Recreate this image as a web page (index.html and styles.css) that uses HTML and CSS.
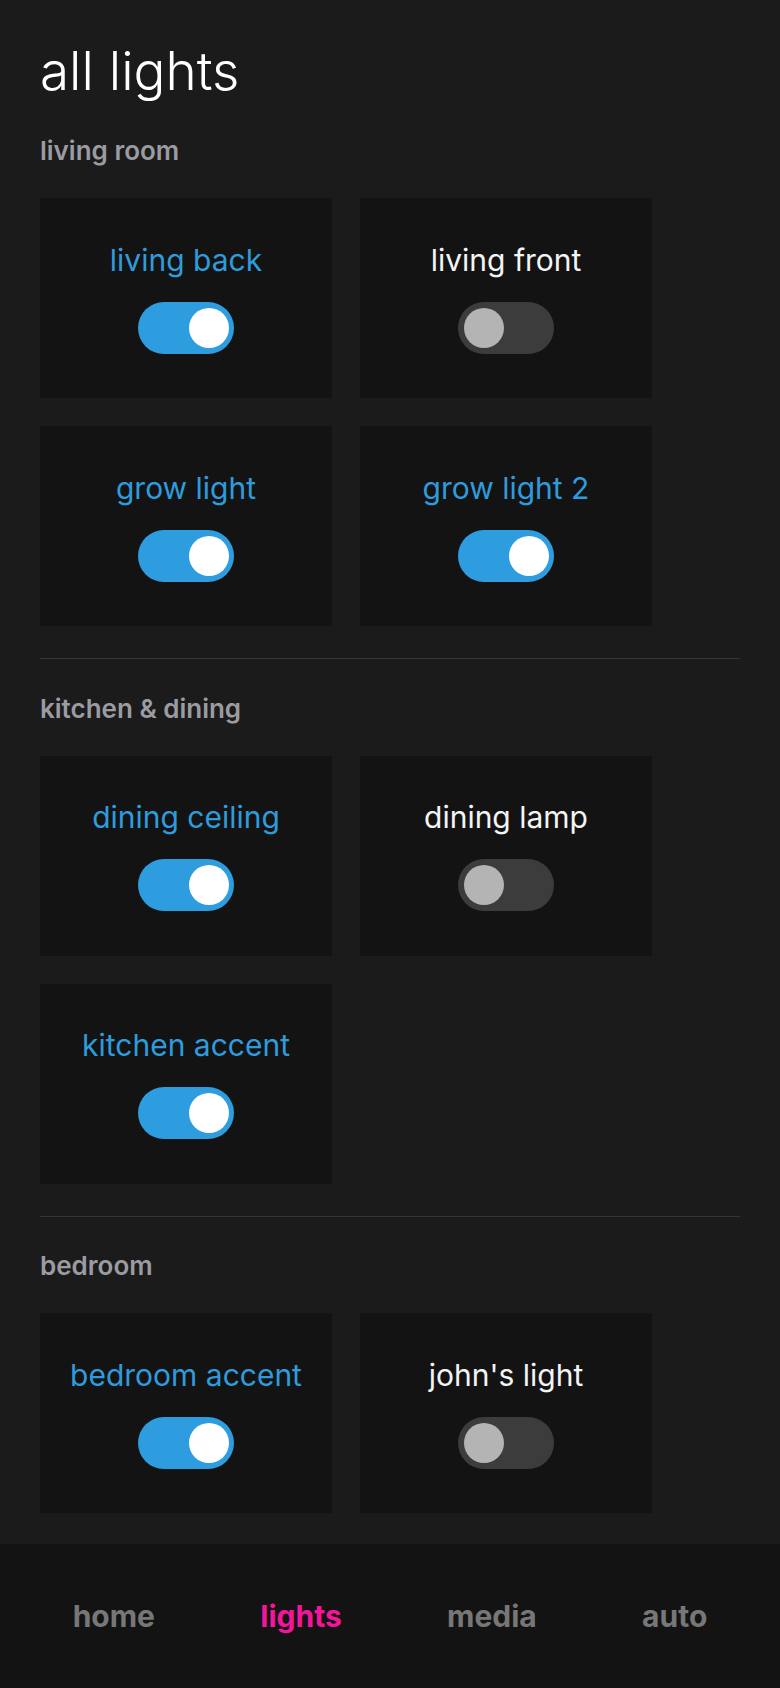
FILE: index.html
```html
<!DOCTYPE html>
<html lang="en">
<head>
  <meta charset="UTF-8">
  <title>all lights</title>
  <link rel="stylesheet" href="styles.css">
</head>
<body>
  <main class="pagina">
    <h1 class="titulo">all lights</h1>

    <section class="sala">
      <h2 class="sala-nome">living room</h2>
      <div class="grade">
        <div class="luz ligada"><span class="luz-nome">living back</span><div class="chave"></div></div>
        <div class="luz"><span class="luz-nome">living front</span><div class="chave"></div></div>
        <div class="luz ligada"><span class="luz-nome">grow light</span><div class="chave"></div></div>
        <div class="luz ligada"><span class="luz-nome">grow light 2</span><div class="chave"></div></div>
      </div>
    </section>

    <section class="sala">
      <h2 class="sala-nome">kitchen &amp; dining</h2>
      <div class="grade">
        <div class="luz ligada"><span class="luz-nome">dining ceiling</span><div class="chave"></div></div>
        <div class="luz"><span class="luz-nome">dining lamp</span><div class="chave"></div></div>
        <div class="luz ligada"><span class="luz-nome">kitchen accent</span><div class="chave"></div></div>
      </div>
    </section>

    <section class="sala">
      <h2 class="sala-nome">bedroom</h2>
      <div class="grade">
        <div class="luz ligada"><span class="luz-nome">bedroom accent</span><div class="chave"></div></div>
        <div class="luz"><span class="luz-nome">john's light</span><div class="chave"></div></div>
      </div>
    </section>
  </main>

  <nav class="menu">
    <a class="menu-item">home</a>
    <a class="menu-item ativo">lights</a>
    <a class="menu-item">media</a>
    <a class="menu-item">auto</a>
  </nav>

  <script>
    // liga/desliga ao clicar no cartao
    document.querySelectorAll(".luz").forEach(luz => {
      luz.addEventListener("click", () => luz.classList.toggle("ligada"));
    });
  </script>
</body>
</html>
```

FILE: styles.css
```css
* {
  box-sizing: border-box;
  margin: 0;
  padding: 0;
}

body {
  background: #1b1b1b;
  color: #fff;
  font-family: Inter, "Noto Sans", sans-serif;
  height: 100vh;
  display: flex;
  flex-direction: column;
}

.pagina {
  flex: 1;
  overflow: hidden;
  padding: 41px 40px 0;
}

.titulo {
  font-size: 53px;
  font-weight: 300;
  line-height: 60px;
  margin-bottom: 36px;
}

.sala {
  padding: 35.5px 0 32px;
  border-bottom: 1px solid #353535;
}

.sala:first-of-type {
  padding-top: 0;
}

.sala:last-of-type {
  border-bottom: none;
}

.sala-nome {
  font-size: 26px;
  font-weight: 600;
  line-height: 28px;
  color: #9b9ca1;
  margin-bottom: 33px;
}

.grade {
  display: grid;
  grid-template-columns: repeat(2, 292px);
  gap: 28px;
}

.luz {
  height: 200px;
  background: #131313;
  display: flex;
  flex-direction: column;
  align-items: center;
  justify-content: center;
  gap: 25px;
  cursor: pointer;
}

.luz-nome {
  font-size: 30px;
  line-height: 34px;
  color: #f4f4f4;
}

.chave {
  width: 96px;
  height: 52px;
  border-radius: 26px;
  background: #3c3c3c;
  padding: 6px;
  display: flex;
}

.chave::after {
  content: "";
  width: 40px;
  height: 40px;
  border-radius: 50%;
  background: #b4b4b4;
}

.ligada .luz-nome {
  color: #2e9cdc;
}

.ligada .chave {
  background: #2e9ddf;
  justify-content: flex-end;
  padding-right: 5px;
}

.ligada .chave::after {
  background: #fff;
}

.menu {
  height: 144px;
  flex-shrink: 0;
  background: #131313;
  display: flex;
  align-items: center;
  justify-content: space-around;
  padding: 0 20px;
}

.menu-item {
  font-size: 30px;
  font-weight: 700;
  line-height: 34px;
  color: #777;
  cursor: pointer;
}

.menu-item.ativo {
  color: #f5159a;
}
```
